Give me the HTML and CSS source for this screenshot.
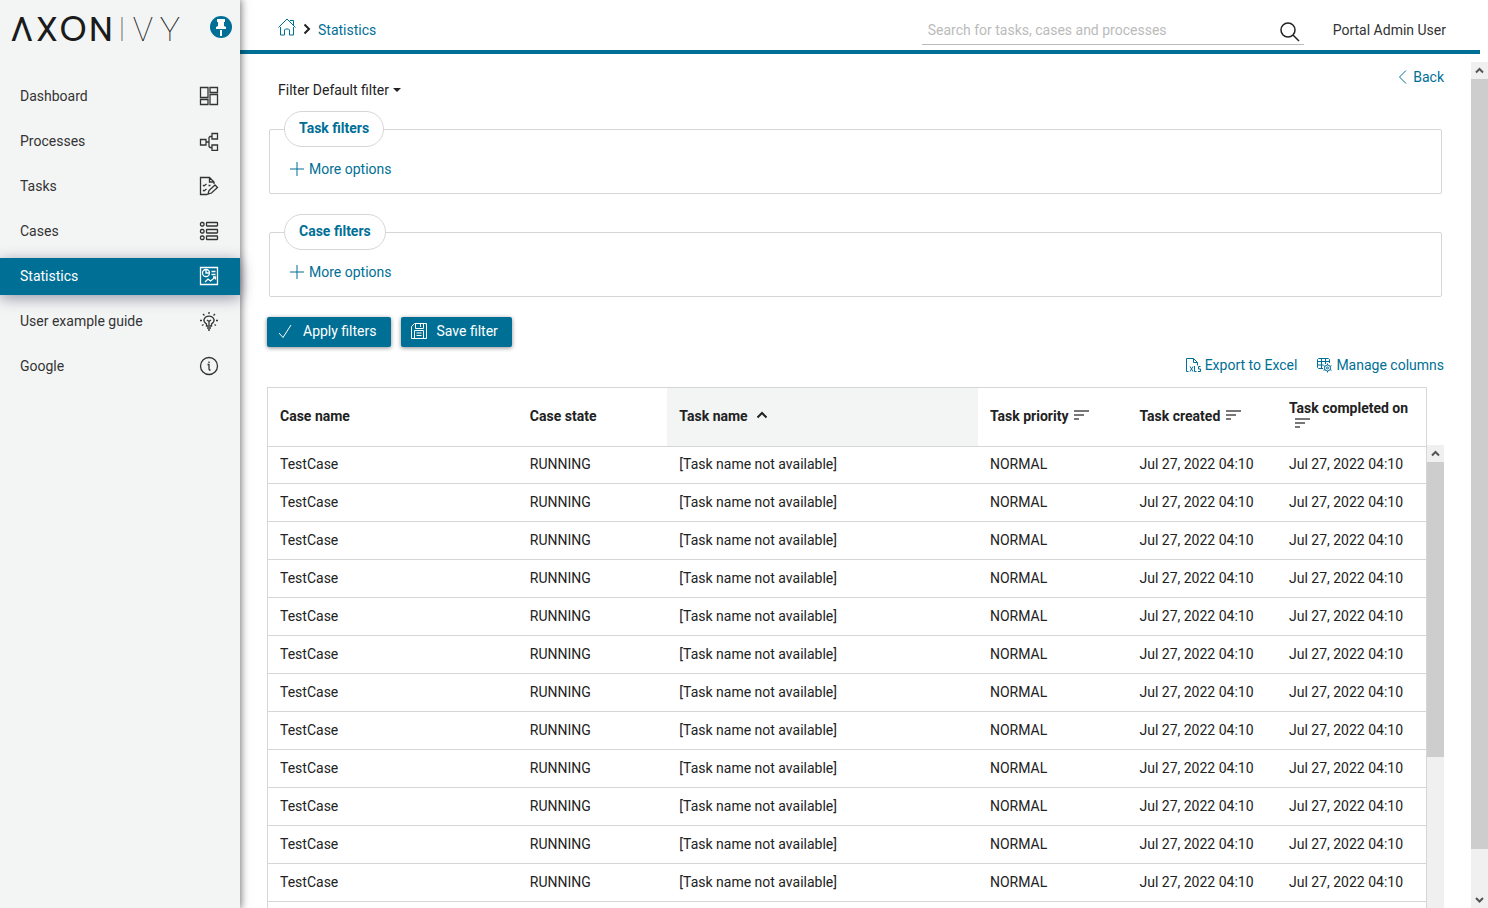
FILE: index.html
```html
<!DOCTYPE html>
<html lang="en">
<head>
    <meta charset="UTF-8">
    <meta name="viewport" content="width=device-width, initial-scale=1.0">
    <title>Statistics</title>
    <link rel="stylesheet" href="styles.css">
</head>
<body>
    <!-- Sidebar -->
    <aside class="sidebar">
        <div class="brand">
            <svg class="logo" width="180" height="52" viewBox="0 0 180 52" role="img" aria-label="Axon Ivy">
                <text class="logo-axon" y="37" x="16">Λ</text>
                <text class="logo-axon logo-narrow" y="37" x="41">X</text>
                <text class="logo-axon logo-round" y="37" x="67">O</text>
                <text class="logo-axon logo-narrow" y="37" x="95">N</text>
                <text class="logo-ivy logo-line" y="37" x="116">I</text>
                <text class="logo-ivy" y="37" x="137">V</text>
                <text class="logo-ivy" y="37" x="164">Y</text>
            </svg>
            <button class="pin" type="button" aria-label="Pin menu">
                <svg width="22" height="22" viewBox="0 0 22 22">
                    <path d="M7 3h8v3h-1v4l2 1v2H6v-2l2-1V6H7z" fill="#fff"/>
                    <path d="M10 14h2v6h-2z" fill="#fff"/>
                </svg>
            </button>
        </div>
        <nav class="menu">
            <a href="#dashboard">Dashboard
                <svg class="icon" viewBox="0 0 20 20"><path d="M1.5 1.5H9v10H1.5zM11 1.5h7.5v5H11zM1.5 13.5H9v5H1.5zM11 8.5h7.5v10H11z"/></svg>
            </a>
            <a href="#processes">Processes
                <svg class="icon" viewBox="0 0 20 20"><path d="M1.5 8.500h5.500v5.500H1.5zM13 2.500h5.500V8H13zM13 14h5.500v5.500H13zM7 11h3M13 5.500h-2l-1 1v9l1 1h2"/></svg>
            </a>
            <a href="#tasks">Tasks
                <svg class="icon" viewBox="0 0 20 20"><path d="M8 18.500H1.500v-17h9l4.500 4.500v2M10.500 1.500V6H15M4 9l1 1 2.500-2M4 14l1 1 2.500-2M9.500 9.500h2M9 18l1-3.500 6-5.500 2.500 2.500-6 5.500zM8 18.500l3-1"/></svg>
            </a>
            <a href="#cases">Cases
                <svg class="icon" viewBox="0 0 20 20"><rect x="7.500" y="1.500" width="11" height="3.500" rx=".5"/><rect x="7.500" y="8.500" width="11" height="3.500" rx=".5"/><rect x="7.500" y="15" width="11" height="3.500" rx=".5"/><rect x="1.500" y="1.500" width="3.500" height="3.500" rx="1.200"/><rect x="1.500" y="8.500" width="3.500" height="3.500" rx="1.200"/><rect x="1.500" y="15" width="3.500" height="3.500" rx="1.200"/></svg>
            </a>
            <a href="#statistics" class="active">Statistics
                <svg class="icon" viewBox="0 0 20 20"><path d="M1.500 1.500h17v17h-17zM12.500 5.500h4M12.500 8.500h4M7 3.500V7h3.500M6 16l3-3 2.500 2 5-4M14 11h2.500v2.500"/><circle cx="7" cy="7" r="3.500"/></svg>
            </a>
            <a href="#guide">User example guide
                <svg class="icon" viewBox="0 0 20 20"><path d="M7.500 15v-2C5.500 11.500 4.500 10 5 8.500c1.500-4.500 8.500-4.500 10 0 .5 1.500-.5 3-2.500 4.500v2zM8 17h4M9 19h2M8 9l2 1.500L12 9M10 10.500V14M10 1v2M4 3l1.500 1.500M16 3l-1.500 1.500M1 9.500h2M17 9.500h2M3 14.500l1.500-1M17 14.500l-1.500-1"/></svg>
            </a>
            <a href="#google">Google
                <svg class="icon" viewBox="0 0 20 20"><circle cx="10" cy="10" r="8.500"/><path d="M8.500 8.500H10V13l.5 1h1M10 5.500V7"/></svg>
            </a>
        </nav>
    </aside>

    <div class="page">
        <!-- Top bar -->
        <header class="topbar">
            <nav class="breadcrumb" aria-label="Breadcrumb">
                <a href="#home" aria-label="Home">
                    <svg class="home" width="18" height="18" viewBox="0 0 18 18"><path d="M.5 9.500L9 1l8.500 8.500M12 2.500h3.500v5M2.500 9v8h4v-5l1-1h3l1 1v5h4V9"/></svg>
                </a>
                <svg class="separator" width="8" height="12" viewBox="0 0 8 12"><path d="M1.500 1.500L6 6l-4.500 4.500"/></svg>
                <a href="#statistics">Statistics</a>
            </nav>
            <form class="search">
                <input type="text" aria-label="Search" placeholder="Search for tasks, cases and processes">
                <button type="button" aria-label="Start search">
                    <svg width="20" height="20" viewBox="0 0 20 20"><circle cx="8" cy="8" r="7"/><path d="M13 13l6 6"/></svg>
                </button>
            </form>
            <a class="user" href="#user">Portal Admin User</a>
        </header>

        <div class="viewport">
            <main class="content">
                <div class="content-head">
                    <button class="filter-select" type="button">Filter Default filter <span class="caret"></span></button>
                    <a class="back" href="#back">
                        <svg width="10" height="16" viewBox="0 0 10 16"><path d="M9 1.500L2.500 8 9 14.500"/></svg>
                        Back
                    </a>
                </div>

                <!-- Filters -->
                <fieldset class="filter-box">
                    <legend>Task filters</legend>
                    <button class="more" type="button">
                        <svg width="14" height="14" viewBox="0 0 14 14"><path d="M7 0v14M0 7h14"/></svg>
                        More options
                    </button>
                </fieldset>
                <fieldset class="filter-box">
                    <legend>Case filters</legend>
                    <button class="more" type="button">
                        <svg width="14" height="14" viewBox="0 0 14 14"><path d="M7 0v14M0 7h14"/></svg>
                        More options
                    </button>
                </fieldset>

                <div class="buttons">
                    <button type="button">
                        <svg width="18" height="18" viewBox="0 0 18 18"><path d="M3 11l4 4.500L15 3"/></svg>
                        Apply filters
                    </button>
                    <button type="button">
                        <svg width="18" height="18" viewBox="0 0 18 18"><path d="M4.500 1.500h12v15h-15v-12zM5.500 1.500v5h8v-5M10.500 2v3M4.500 16.500v-8h9v8M6.500 11h5M6.500 13.500h5"/></svg>
                        Save filter
                    </button>
                </div>

                <div class="table-links">
                    <a href="#export">
                        <svg width="16" height="16" viewBox="0 0 16 16"><path d="M3.500 14.500h-2V1.500h7l4 4v3M8.500 1.500v4h4M5 9.500l3 5M8 9.500l-3 5M9.500 9v5.500h2M15.500 9.500h-2v2.500h2v2.500h-2.500"/></svg>
                        Export to Excel
                    </a>
                    <a href="#columns">
                        <svg width="16" height="16" viewBox="0 0 16 16"><path d="M7 11.500H2.500l-1-1v-8l1-1h10l1 1V6M1.500 4.500h12M1.500 8h6M5.500 1.500v10M9.500 1.500V7"/><circle cx="11.500" cy="11" r="3"/><circle cx="11.500" cy="11" r="1"/><path d="M11.500 6.500V8M11.500 14v1.500M7.500 8.700l1.500.8M14 12.500l1.500.8M7.500 13.300l1.500-.8M14 9.500l1.500-.8"/></svg>
                        Manage columns
                    </a>
                </div>

                <!-- Result table -->
                <div class="table-area">
                    <table class="results">
                        <colgroup>
                            <col class="col-case">
                            <col>
                            <col class="col-task">
                            <col>
                            <col>
                            <col>
                        </colgroup>
                        <thead>
                            <tr>
                                <th>Case name</th>
                                <th>Case state</th>
                                <th class="sorted">Task name<svg class="sort" width="16" height="12" viewBox="0 0 16 12"><path d="M3.500 8.500L8 4l4.500 4.500"/></svg></th>
                                <th>Task priority<svg class="sort" width="16" height="12" viewBox="0 0 16 12"><path d="M0 2h15M0 6h10M0 10h5"/></svg></th>
                                <th>Task created<svg class="sort" width="16" height="12" viewBox="0 0 16 12"><path d="M0 2h15M0 6h10M0 10h5"/></svg></th>
                                <th>Task completed on<svg class="sort" width="16" height="12" viewBox="0 0 16 12"><path d="M0 2h15M0 6h10M0 10h5"/></svg></th>
                            </tr>
                        </thead>
                        <tbody id="rows"></tbody>
                    </table>
                    <div class="scrollbar table-scroll">
                        <svg width="17" height="17" viewBox="0 0 17 17"><path d="M5 10.500L8.500 7l3.500 3.500"/></svg>
                        <div class="thumb"></div>
                    </div>
                </div>
            </main>
            <div class="scrollbar page-scroll">
                <svg width="17" height="17" viewBox="0 0 17 17"><path d="M5 10.500L8.500 7l3.500 3.500"/></svg>
                <div class="thumb"></div>
                <svg width="17" height="17" viewBox="0 0 17 17"><path d="M5 7l3.500 3.500L12 7"/></svg>
            </div>
        </div>
    </div>

    <script>
        // Fill the result table
        const row = ['TestCase', 'RUNNING', '[Task name not available]', 'NORMAL', 'Jul 27, 2022 04:10', 'Jul 27, 2022 04:10'];
        const tbody = document.getElementById('rows');
        for (let i = 0; i < 13; i++) {
            const tr = document.createElement('tr');
            tr.innerHTML = row.map(value => `<td>${value}</td>`).join('');
            tbody.appendChild(tr);
        }
    </script>
</body>
</html>
```
FILE: styles.css
```css
* {
    box-sizing: border-box;
}
body {
    margin: 0;
    display: flex;
    height: 100vh;
    overflow: hidden;
    font-family: Roboto, sans-serif;
    font-size: 14px;
    line-height: 20px;
    color: #222;
    background: #fff;
}
a {
    color: #006f96;
    text-decoration: none;
}
button {
    font: inherit;
    border: 0;
    padding: 0;
    background: none;
    cursor: pointer;
}
svg {
    flex: none;
    fill: none;
    stroke: currentColor;
}

/* Sidebar */
.sidebar {
    flex: none;
    width: 240px;
    background: #f3f5f5;
    box-shadow: 0 0 8px 1px rgba(0, 0, 0, 0.55);
    z-index: 1;
}
.brand {
    display: flex;
    justify-content: space-between;
    padding: 4px 8px 0 6px;
    height: 74px;
}
.logo text {
    stroke: none;
    fill: #1b1b1b;
    font-size: 34px;
    text-anchor: middle;
}
.logo .logo-narrow {
    font-family: "Liberation Sans Narrow", Roboto, sans-serif;
}
.logo .logo-round {
    font-family: Lato, sans-serif;
}
.logo .logo-ivy {
    font-weight: 100;
}
.logo .logo-line {
    fill: #666;
}
.pin {
    width: 22px;
    height: 22px;
    margin-top: 12px;
    border-radius: 50%;
    background: #006f96;
}
.pin svg {
    display: block;
    stroke: none;
}
.menu {
    display: flex;
    flex-direction: column;
    gap: 8px;
    padding-top: 4px;
}
.menu a {
    display: flex;
    align-items: center;
    justify-content: space-between;
    height: 37px;
    padding: 0 21px 2px 20px;
    color: #333;
}
.menu a.active {
    color: #fff;
    background: #006f96;
    box-shadow: 0 3px 15px rgba(0, 0, 50, 0.4);
}
.icon {
    width: 20px;
    height: 20px;
    stroke-width: 1.3;
}

/* Top bar */
.page {
    flex: 1;
    min-width: 0;
    display: flex;
    flex-direction: column;
}
.topbar {
    flex: none;
    display: flex;
    align-items: center;
    height: 54px;
    margin: 0 8px 8px 0;
    padding: 6px 34px 0 38px;
    border-bottom: 4px solid #006f96;
}
.breadcrumb {
    display: flex;
    align-items: center;
    gap: 7px;
    margin-top: 4px;
    height: 20px;
}
.home {
    display: block;
    margin-bottom: 6px;
}
.separator {
    margin-bottom: 2px;
    color: #222;
    stroke-width: 2;
}
.search {
    display: flex;
    align-items: center;
    width: 382px;
    height: 30px;
    margin-top: 4px;
    margin-left: auto;
    border-bottom: 1px solid #bbb;
}
.search input {
    flex: 1;
    font: inherit;
    padding: 0 6px;
    border: 0;
    outline: 0;
    background: none;
}
.search input::placeholder {
    color: #bbb;
}
.search button {
    width: 28px;
    padding-top: 4px;
    color: #222;
}
.search svg {
    display: block;
    margin: 0 auto;
    stroke-width: 1.5;
}
.user {
    margin-left: 29px;
    margin-top: 4px;
    color: #333;
}

/* Content */
.viewport {
    flex: 1;
    min-height: 0;
    display: flex;
}
.content {
    flex: 1;
    min-width: 0;
    overflow: hidden;
    padding: 0 27px;
}
.content-head {
    display: flex;
    align-items: flex-start;
    justify-content: space-between;
    height: 49px;
    padding: 5px 0 0 11px;
}
.filter-select {
    display: flex;
    align-items: center;
    gap: 4px;
    margin-top: 13px;
    color: #222;
}
.caret {
    border: 4px solid transparent;
    border-top-color: #222;
    border-bottom: 0;
}
.back {
    display: flex;
    align-items: center;
    gap: 6px;
}
.filter-box {
    margin: 0 2px 20px;
    padding: 12px 20px 14px;
    height: 83px;
    border: 1px solid #d6d6d6;
    border-radius: 2px;
    min-width: 0;
}
.filter-box legend {
    height: 36px;
    margin-left: -6px;
    padding: 6px 14px 8px;
    border: 1px solid #d6d6d6;
    border-radius: 18px;
    color: #006f96;
    font-weight: bold;
}
.more {
    display: flex;
    align-items: center;
    gap: 5px;
    color: #006f96;
}
.buttons {
    display: flex;
    gap: 10px;
}
.buttons button {
    display: flex;
    align-items: center;
    gap: 9px;
    height: 30px;
    padding: 0 14px 2px 9px;
    border-radius: 2px;
    color: #fff;
    background: #006f96;
    box-shadow: 0 1px 4px rgba(0, 0, 0, 0.45);
}
.table-links {
    display: flex;
    justify-content: flex-end;
    gap: 19px;
    padding: 8px 0 12px;
}
.table-links a {
    display: flex;
    align-items: center;
    gap: 4px;
}

/* Table */
.table-area {
    display: flex;
}
.results {
    flex: 1;
    table-layout: fixed;
    border-collapse: collapse;
    border: 1px solid #d6d6d6;
}
.results col {
    width: 12.9%;
}
.results .col-case {
    width: 21.6%;
}
.results .col-task {
    width: 26.8%;
}
.results th,
.results td {
    padding: 0 12px 2px;
    text-align: left;
    border-bottom: 1px solid #d6d6d6;
}
.results th {
    height: 59px;
    line-height: 16px;
}
.results td {
    height: 38px;
}
.results tr:first-child td {
    height: 37px;
}
.results .sorted {
    background: #f3f5f5;
}
.sort {
    margin-left: 6px;
    color: #777;
    stroke-width: 2;
}
.sorted .sort {
    color: #222;
}

/* Scrollbars */
.scrollbar {
    flex: none;
    display: flex;
    flex-direction: column;
    width: 17px;
    background: #f0f0f0;
    color: #555;
}
.scrollbar svg {
    stroke-width: 2;
}
.thumb {
    background: #cdcdcd;
}
.table-scroll {
    margin-top: 58px;
}
.table-scroll .thumb {
    height: 295px;
}
.page-scroll .thumb {
    height: 91%;
    margin-bottom: auto;
}
```
